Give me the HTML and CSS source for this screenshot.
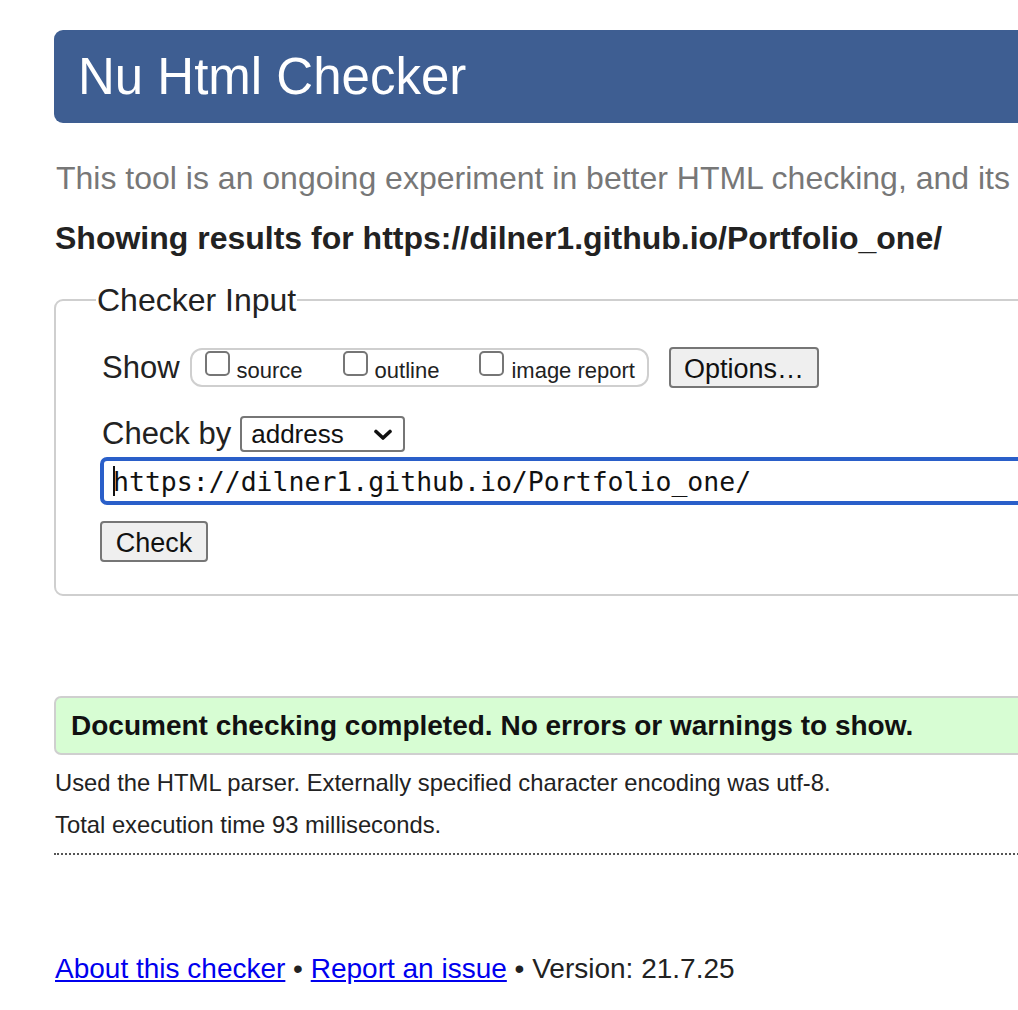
FILE: index.html
```html
<!DOCTYPE html>
<html lang="en">
<head>
<meta charset="utf-8">
<title>Showing results for https://dilner1.github.io/Portfolio_one/ - Nu Html Checker</title>
<link rel="stylesheet" href="styles.css">
</head>
<body>
<div class="page">
  <h1 class="title">Nu Html Checker</h1>
  <p class="intro">This tool is an ongoing experiment in better HTML checking, and its</p>
  <p class="showing">Showing results for https://dilner1.github.io/Portfolio_one/</p>

  <fieldset class="checker">
    <legend class="checker-legend">Checker Input</legend>
    <div class="row row-show">
      <span class="label">Show</span>
      <div class="showbox">
        <label class="opt"><span class="cb"></span>source</label>
        <label class="opt"><span class="cb"></span>outline</label>
        <label class="opt"><span class="cb"></span>image report</label>
      </div>
      <button class="btn btn-options" type="button">Options…</button>
    </div>
    <div class="row row-by">
      <span class="label">Check by</span>
      <div class="select">
        <span>address</span>
        <svg class="chev" width="18" height="12" viewBox="0 0 18 12"><path d="M2 2.5 L9 9 L16 2.5" fill="none" stroke="#111" stroke-width="3.6" stroke-linecap="round" stroke-linejoin="round"/></svg>
      </div>
    </div>
    <div class="urlbox"><span class="caret"></span>https://dilner1.github.io/Portfolio_one/</div>
    <button class="btn btn-check" type="button">Check</button>
  </fieldset>

  <div class="success">Document checking completed. No errors or warnings to show.</div>
  <p class="details">Used the HTML parser. Externally specified character encoding was utf-8.</p>
  <p class="details">Total execution time 93 milliseconds.</p>
  <hr class="dotted">

  <p class="footer"><a href="#">About this checker</a> • <a href="#">Report an issue</a> • Version: 21.7.25</p>
</div>
</body>
</html>
```
FILE: styles.css
```css
html, body {
  margin: 0;
  padding: 0;
  overflow: hidden;
  background: #fff;
}
body {
  font-family: "Liberation Sans", Arial, Helvetica, sans-serif;
  color: #222;
}
.page {
  width: 1200px;
  padding: 30px 0 0 54px;
}
.title {
  margin: 0;
  height: 93px;
  line-height: 93px;
  padding-left: 24px;
  background: #3e5e92;
  color: #fff;
  font-size: 51px;
  font-weight: normal;
  border-radius: 9px;
}
.intro {
  margin: 36px 0 0 2px;
  font-size: 32px;
  line-height: 38px;
  color: #777;
  white-space: nowrap;
}
.showing {
  margin: 21px 0 0 1px;
  font-size: 32px;
  line-height: 40px;
  font-weight: bold;
  color: #222;
}
.checker {
  margin: 26px 0 0 0;
  border: 2px solid #cfcfcf;
  border-radius: 9px;
  padding: 0 0 32px 40px;
  min-width: 0;
}
.checker-legend {
  font-size: 32px;
  padding: 0 1px;
  margin-left: 0;
  line-height: 32px;
  color: #222;
}
.row {
  display: flex;
  align-items: center;
  margin-left: 6px;
}
.row-show {
  margin-top: 31px;
  height: 41px;
}
.label {
  font-size: 31px;
  line-height: 36px;
  color: #222;
}
.showbox {
  margin-left: 10px;
  display: flex;
  align-items: center;
  height: 35px;
  border: 2px solid #cfcfcf;
  border-radius: 12px;
  padding: 0 12px 0 13px;
}
.opt {
  display: flex;
  align-items: center;
  font-size: 22px;
  color: #222;
  margin-right: 40px;
  padding-top: 6px;
}
.opt:last-child { margin-right: 0; }
.cb {
  display: inline-block;
  width: 21px;
  height: 21px;
  border: 2px solid #767676;
  border-radius: 5px;
  margin-right: 7px;
  position: relative;
  top: -7px;
}
.btn {
  font-family: "Liberation Sans", Arial, Helvetica, sans-serif;
  font-size: 27px;
  background: #efefef;
  color: #111;
  border: 2px solid #767676;
  border-radius: 4px;
  padding: 0;
}
.btn-options {
  margin-left: 20px;
  width: 150px;
  height: 41px;
  padding-top: 3px;
}
.row-by {
  margin-top: 28px;
}
.select {
  margin-left: 9px;
  width: 165px;
  height: 36px;
  box-sizing: border-box;
  border: 2px solid #767676;
  border-radius: 4px;
  display: flex;
  align-items: center;
  justify-content: space-between;
  padding: 0 11px 0 9px;
  font-size: 26px;
  color: #111;
}
.chev { margin-top: 2px; }
.urlbox {
  margin: 5px 0 0 4px;
  height: 48px;
  box-sizing: border-box;
  border: 4px solid #2a5fc9;
  border-radius: 7px;
  display: flex;
  align-items: center;
  padding-left: 9px;
  font-family: "DejaVu Sans Mono", "Liberation Mono", monospace;
  font-size: 26.5px;
  color: #111;
  white-space: nowrap;
}
.caret {
  display: inline-block;
  width: 2px;
  height: 30px;
  background: #111;
  margin-right: -2px;
}
.btn-check {
  display: block;
  margin: 16px 0 0 4px;
  width: 108px;
  height: 41px;
  padding-top: 3px;
}
.success {
  margin-top: 100px;
  height: 59px;
  box-sizing: border-box;
  border: 2px solid #cfcfcf;
  border-radius: 7px;
  background: #d7fdd3;
  padding-left: 15px;
  display: flex;
  align-items: center;
  font-size: 28px;
  font-weight: bold;
  color: #111;
}
.details {
  margin: 14px 0 0 1px;
  font-size: 23.8px;
  line-height: 28px;
  color: #222;
}
.details + .details {
  margin-top: 14px;
}
.dotted {
  margin: 14px 0 0 0;
  border: 0;
  border-top: 2px dotted #555;
  height: 0;
}
.footer {
  margin: 98px 0 0 1px;
  font-size: 28px;
  line-height: 32px;
  color: #222;
}
.footer a {
  color: #0000ee;
  text-decoration: underline;
}
```
